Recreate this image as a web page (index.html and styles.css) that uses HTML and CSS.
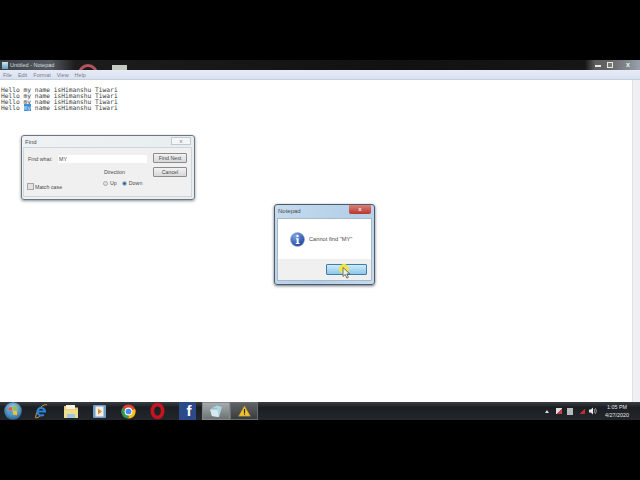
FILE: index.html
```html
<!DOCTYPE html>
<html lang="en">

<head>
  <meta charset="UTF-8">
  <title>Untitled - Notepad</title>
  <link rel="stylesheet" href="styles.css">
</head>

<body>
  <div class="screen">
    <header class="titlebar">
      <span class="app-icon"></span>
      <span class="app-title">Untitled - Notepad</span>
      <span class="peek-red"></span>
      <span class="peek-white"></span>
      <div class="win-buttons">
        <span class="win-min"></span>
        <span class="win-max"></span>
        <span class="win-close">x</span>
      </div>
    </header>

    <nav class="menubar">
      <span>File</span>
      <span>Edit</span>
      <span>Format</span>
      <span>View</span>
      <span>Help</span>
    </nav>

    <main class="editor">
      <div class="editor-text">
        <div>Hello my name isHimanshu Tiwari</div>
        <div>Hello my name isHimanshu Tiwari</div>
        <div>Hello my name isHimanshu Tiwari</div>
        <div>Hello <mark>my</mark> name isHimanshu Tiwari</div>
      </div>
      <div class="scrollbar"></div>

      <!-- Find dialog -->
      <section class="dialog find">
        <div class="dialog-title">
          <span>Find</span>
          <span class="find-close">x</span>
        </div>
        <div class="find-body">
          <div class="find-left">
            <div class="find-row">
              <label>Find what:</label>
              <div class="find-input">MY</div>
            </div>
            <div class="find-options">
              <div class="match-case"><span class="checkbox"></span>Match case</div>
              <div class="direction">
                <div class="direction-label">Direction</div>
                <div class="radios">
                  <span class="radio"></span>Up
                  <span class="radio radio-on"></span>Down
                </div>
              </div>
            </div>
          </div>
          <div class="find-buttons">
            <div class="btn">Find Next</div>
            <div class="btn">Cancel</div>
          </div>
        </div>
      </section>

      <!-- Message box -->
      <section class="dialog msgbox">
        <div class="dialog-title">
          <span>Notepad</span>
          <span class="msg-close">x</span>
        </div>
        <div class="msg-panel">
          <div class="msg-body">
            <svg class="info-icon" width="15" height="15" viewBox="0 0 15 15">
              <defs>
                <radialGradient id="infoFill" cx="35%" cy="25%" r="85%">
                  <stop offset="0" stop-color="#7ea4e6"/>
                  <stop offset="1" stop-color="#153a96"/>
                </radialGradient>
              </defs>
              <circle cx="7.5" cy="7.5" r="7" fill="url(#infoFill)" stroke="#9fb2d8" stroke-width=".6"/>
              <circle cx="7.5" cy="4" r="1.2" fill="#fff"/>
              <path d="M6 6.3h2.6v4.6h1v1H5.7v-1h1V7.3H6z" fill="#fff"/>
            </svg>
            <span>Cannot find "MY"</span>
          </div>
          <div class="msg-footer">
            <div class="ok-btn"></div>
          </div>
        </div>
      </section>

      <!-- Mouse cursor with highlight -->
      <div class="cursor-glow"></div>
      <svg class="cursor" width="9" height="12" viewBox="0 0 9 12">
        <path d="M1 0.5v9l2.2-2 1.6 3.6 1.6-.7-1.6-3.5h3z" fill="#eee" stroke="#555" stroke-width=".8"/>
      </svg>
    </main>

    <footer class="taskbar">
      <div class="start-orb">
        <svg width="18" height="18" viewBox="0 0 16 16">
          <defs>
            <radialGradient id="orbFill" cx="50%" cy="35%" r="70%">
              <stop offset="0" stop-color="#a8d4ee"/>
              <stop offset="1" stop-color="#1d5f96"/>
            </radialGradient>
          </defs>
          <circle cx="8" cy="8" r="7.8" fill="url(#orbFill)"/>
          <path d="M4 5l3.4-.6v3.1H4z" fill="#e9573f"/>
          <path d="M8 4.3l3.6-.6v3.7H8z" fill="#8cc63f"/>
          <path d="M4 8h3.4v3.1L4 10.6z" fill="#3fa0e0"/>
          <path d="M8 8h3.6v3.7L8 11.2z" fill="#f5c22b"/>
        </svg>
      </div>

      <div class="task-item">
        <svg width="15" height="16" viewBox="0 0 15 16">
          <path d="M13 2C10 .5 3 5 1.500 14.500c1.500 1 3.500-.5 5-2" fill="none" stroke="#c9a63c" stroke-width="1"/>
          <path d="M4.500 8.500h6.500a3.800 3.800 0 1 0-1.200 3" fill="none" stroke="#2f83d6" stroke-width="2"/>
        </svg>
      </div>

      <div class="task-item">
        <svg width="16" height="15" viewBox="0 0 16 15">
          <path d="M1 2h5l1 1.500h8V14H1z" fill="#e8cf78"/>
          <path d="M3 1h9v4H3z" fill="#f6f3e2"/>
          <path d="M1 6h14v8H1z" fill="#f0dc90"/>
          <path d="M4 10h8v4H4z" fill="#9cc7dd"/>
        </svg>
      </div>

      <div class="task-item">
        <svg width="13" height="13" viewBox="0 0 13 13">
          <rect width="13" height="13" rx="1" fill="#6f9fc4"/>
          <rect x="2.500" y="1.500" width="8" height="10" fill="#f0efe8"/>
          <path d="M5 3.500l4 3-4 3z" fill="#e58a2c"/>
        </svg>
      </div>

      <div class="task-item">
        <svg width="15" height="15" viewBox="0 0 16 16">
          <circle cx="8" cy="8" r="7.500" fill="#db4437"/>
          <path d="M8 8L15 5.300A7.500 7.500 0 0 1 8 15.500z" fill="#f4c20d"/>
          <path d="M8 8L8 15.500A7.500 7.500 0 0 1 1.500 4.200z" fill="#2f9e52"/>
          <circle cx="8" cy="8" r="3.600" fill="#4a8af4" stroke="#fff" stroke-width="1.100"/>
        </svg>
      </div>

      <div class="task-item">
        <svg width="15" height="16" viewBox="0 0 15 16">
          <ellipse cx="7.500" cy="8" rx="5.200" ry="6.400" fill="none" stroke="#c8141f" stroke-width="3.600"/>
        </svg>
      </div>

      <div class="task-item task-fb">f</div>

      <div class="task-item task-active">
        <svg width="16" height="15" viewBox="0 0 16 15">
          <path d="M2 5l7-3.500 5 1.500-3 10-7-1z" fill="#a8d6e2"/>
          <path d="M2 5l2 7 7 1-2-8z" fill="#d5e9ee"/>
          <path d="M2 5l7 0" stroke="#6c8f9c" stroke-width=".6"/>
        </svg>
      </div>

      <div class="task-item task-open">
        <svg width="13" height="12" viewBox="0 0 15 14">
          <path d="M7.500 1L14.500 13H.5z" fill="#f2c230" stroke="#a07c14" stroke-width=".5"/>
          <path d="M6.800 4.800h1.400v4.400H6.800zM6.800 10h1.400v1.400H6.800z" fill="#2b2b2b"/>
        </svg>
      </div>

      <div class="tray">
        <span class="tray-arrow"></span>
        <span class="tray-flag"></span>
        <span class="tray-doc"></span>
        <span class="tray-net"></span>
        <svg class="tray-vol" width="8" height="8" viewBox="0 0 8 8">
          <path d="M0 2.500h1.800L4 .5v7L1.800 5.500H0z" fill="#e8e8e8"/>
          <path d="M5 2a3 3 0 0 1 0 4M6.200 1a4.500 4.500 0 0 1 0 6" fill="none" stroke="#bbb" stroke-width=".7"/>
        </svg>
        <div class="clock">
          <div>1:05 PM</div>
          <div>4/27/2020</div>
        </div>
      </div>
    </footer>
  </div>
</body>

</html>
```

FILE: styles.css
```css
/* Reset */

* {
  box-sizing: border-box;
  margin: 0;
  padding: 0;
}

body {
  background: #000;
  font-family: "Liberation Sans", Arial, sans-serif;
  overflow: hidden;
}

/* Frame: the video sits between two black bars */

.screen {
  width: 640px;
  height: 360px;
  margin: 60px 0;
  display: flex;
  flex-direction: column;
  overflow: hidden;
}

/* Title bar */

.titlebar {
  height: 10px;
  flex-shrink: 0;
  position: relative;
  display: flex;
  align-items: center;
  background: linear-gradient(90deg, #3a3f44 0, #565c62 50px, #1c1c1c 75px, #111 400px, #161616 585px, #5c5c5c 595px, #666 610px, #98a2ae 640px);
  color: #d8dbde;
  font-size: 5.5px;
  overflow: hidden;
}

.app-icon {
  width: 6px;
  height: 7px;
  margin: 0 2px 0 2px;
  background: linear-gradient(#cfe6f0, #5e9bc0);
}

.peek-red {
  position: absolute;
  left: 78px;
  top: 4px;
  width: 20px;
  height: 20px;
  border: 3px solid #b5535b;
  border-radius: 50%;
}

.peek-white {
  position: absolute;
  left: 112px;
  top: 5px;
  width: 15px;
  height: 6px;
  background: #c4cac0;
}

.win-buttons {
  position: absolute;
  right: 0;
  top: 0;
  width: 45px;
  height: 9px;
  display: flex;
  align-items: center;
  gap: 6px;
}

.win-min {
  width: 6px;
  height: 2px;
  margin-top: 2px;
  background: #e6e6e6;
}

.win-max {
  width: 6px;
  height: 6px;
  border: 1px solid #e6e6e6;
  background: #777;
}

.win-close {
  margin-left: 7px;
  font-size: 7px;
  font-weight: bold;
  line-height: 8px;
  color: #eee;
}

/* Menu bar */

.menubar {
  height: 10px;
  flex-shrink: 0;
  display: flex;
  align-items: center;
  gap: 6px;
  padding-left: 3px;
  background: linear-gradient(#e6ebf7, #d9e1f1);
  border-bottom: 1px solid #c8d0dd;
  color: #7c8088;
  font-size: 5.5px;
}

/* Editor area */

.editor {
  flex: 1;
  position: relative;
  background: #fff;
}

.editor-text {
  padding: 7px 0 0 1px;
  font-family: "DejaVu Sans Mono", "Liberation Mono", monospace;
  font-size: 6.25px;
  line-height: 6px;
  color: #3a3a3a;
}

.editor-text div {
  white-space: pre;
}

mark {
  background: #3b8ed8;
  color: #cfe4f6;
}

.scrollbar {
  position: absolute;
  top: 0;
  right: 0;
  bottom: 0;
  width: 8px;
  background: #f0f0f2;
  border-left: 1px solid #e2e2e4;
}

/* Dialogs */

.dialog {
  position: absolute;
  display: flex;
  flex-direction: column;
  border: 1px solid #6d7580;
  border-radius: 3px;
  color: #4a4a4a;
  font-size: 5.5px;
}

.dialog-title {
  flex-shrink: 0;
  display: flex;
  justify-content: space-between;
  align-items: center;
  font-size: 6px;
}

.find {
  left: 21px;
  top: 55px;
  width: 174px;
  height: 65px;
  background: linear-gradient(90deg, #eef2f5, #e8edf0);
  box-shadow: 0 1px 3px rgba(60, 70, 80, 0.6);
}

.find .dialog-title {
  height: 11px;
  padding-left: 3px;
}

.find-close {
  width: 20px;
  height: 8px;
  margin: -1px 3px 0 0;
  border: 1px solid #c3c9cf;
  background: #f4f5f6;
  text-align: center;
  line-height: 6px;
  color: #777;
}

.find-body {
  flex: 1;
  display: flex;
  gap: 6px;
  margin: 0 2px 2px 1px;
  padding: 5px 4px 0;
  background: #f0f0f0;
  border: 1px solid #d0d5da;
  font-size: 5.3px;
}

.find-left {
  flex: 1;
  display: flex;
  flex-direction: column;
}

.find-row {
  display: flex;
  align-items: center;
  margin-top: 2px;
}

.find-row label {
  width: 30px;
}

.find-input {
  flex: 1;
  height: 8px;
  padding-left: 1px;
  background: #fff;
  line-height: 8px;
}

.find-options {
  display: flex;
  justify-content: space-between;
  padding-top: 6px;
}

.match-case {
  display: flex;
  align-items: center;
  align-self: flex-start;
  gap: 1px;
  margin: 14px 0 0 -1px;
}

.checkbox {
  width: 7px;
  height: 7px;
  background: #e2e2e2;
  border: 1px solid #a6a6a6;
}

.direction {
  width: 43px;
}

.direction-label {
  line-height: 6px;
}

.radios {
  display: flex;
  align-items: center;
  gap: 2px;
  height: 6px;
  margin: 5px 0 0 -1px;
}

.radio {
  width: 5px;
  height: 5px;
  border-radius: 50%;
  background: #e4e4e4;
  border: 1px solid #a8a8a8;
}

.radio-on {
  margin-left: 3px;
  background: #2a6f96;
  border-color: #b8c8d0;
}

.find-buttons {
  width: 34px;
  display: flex;
  flex-direction: column;
  gap: 4px;
}

.btn {
  height: 10px;
  background: linear-gradient(#f2f2f2, #d8d8d8);
  border: 1px solid #8c8c8c;
  border-radius: 1px;
  text-align: center;
  line-height: 8px;
}

/* Message box */

.msgbox {
  left: 274px;
  top: 124px;
  width: 101px;
  height: 81px;
  border-color: #4e5a68;
  background: linear-gradient(120deg, #c5dbee, #b3cfe8 60%, #c6dcef);
  box-shadow: 0 1px 3px rgba(40, 50, 60, 0.7);
}

.msgbox .dialog-title {
  height: 13px;
  align-items: flex-start;
  padding: 3px 0 0 3px;
}

.msg-close {
  width: 22px;
  height: 9px;
  margin: -3px 3px 0 0;
  background: linear-gradient(#d9827a, #b8352c);
  border-radius: 0 0 2px 2px;
  text-align: center;
  line-height: 8px;
  color: #f4e4e2;
  font-weight: bold;
}

.msg-panel {
  flex: 1;
  display: flex;
  flex-direction: column;
  margin: 0 2px 3px;
  background: #fff;
  border: 1px solid #a9b8c6;
}

.msg-body {
  flex: 1;
  display: flex;
  align-items: center;
  gap: 4px;
  padding-left: 12px;
  font-size: 5.7px;
}

.msg-footer {
  height: 21px;
  display: flex;
  justify-content: flex-end;
  align-items: center;
  padding: 0 4px 1px 0;
  background: #f0f0f0;
}

.ok-btn {
  width: 41px;
  height: 11px;
  background: linear-gradient(#cfeaf9, #8cc7ea);
  border: 1px solid #3d7ea6;
  border-radius: 1px;
}

.cursor-glow {
  position: absolute;
  left: 339px;
  top: 184px;
  width: 10px;
  height: 10px;
  border-radius: 50%;
  background: #ece64a;
}

.cursor {
  position: absolute;
  left: 342px;
  top: 187px;
}

/* Taskbar */

.taskbar {
  height: 18px;
  flex-shrink: 0;
  display: flex;
  align-items: center;
  background: linear-gradient(#3a3e42, #1b1f24 30%, #23272b);
}

.start-orb {
  width: 25px;
  height: 18px;
  display: flex;
  justify-content: center;
  align-items: center;
  margin-right: 2px;
}

.task-item {
  width: 29px;
  height: 18px;
  display: flex;
  justify-content: center;
  align-items: center;
}

.task-fb {
  width: 17px;
  margin: 0 6px 0 7px;
  padding-left: 3px;
  background: #2a4a8a;
  color: #fff;
  font-size: 15px;
  font-weight: bold;
  line-height: 18px;
}

.task-active {
  width: 28px;
  background: linear-gradient(#a6abae, #6d7275);
  border: 1px solid #85898c;
}

.task-open {
  width: 28px;
  background: linear-gradient(#5f6265, #3a3d40);
  border: 1px solid #6a6d70;
}

.tray {
  flex: 1;
  display: flex;
  align-items: center;
  padding-right: 11px;
  color: #e4e4e4;
}

.tray-arrow {
  width: 0;
  height: 0;
  margin-left: 287px;
  border: 2px solid transparent;
  border-top-width: 0;
  border-bottom: 3px solid #ddd;
}

.tray-flag {
  width: 6px;
  height: 6px;
  margin-left: 7px;
  background: linear-gradient(135deg, #ddd 50%, #c4404a 50%);
}

.tray-doc {
  width: 6px;
  height: 7px;
  margin-left: 5px;
  background: #b5b9bb;
}

.tray-net {
  width: 6px;
  height: 5px;
  margin-left: 6px;
  background: linear-gradient(135deg, transparent 50%, #b5302f 50%);
}

.tray-vol {
  margin-left: 4px;
}

.clock {
  margin-left: auto;
  font-size: 5.4px;
  line-height: 8px;
  text-align: center;
}
```
